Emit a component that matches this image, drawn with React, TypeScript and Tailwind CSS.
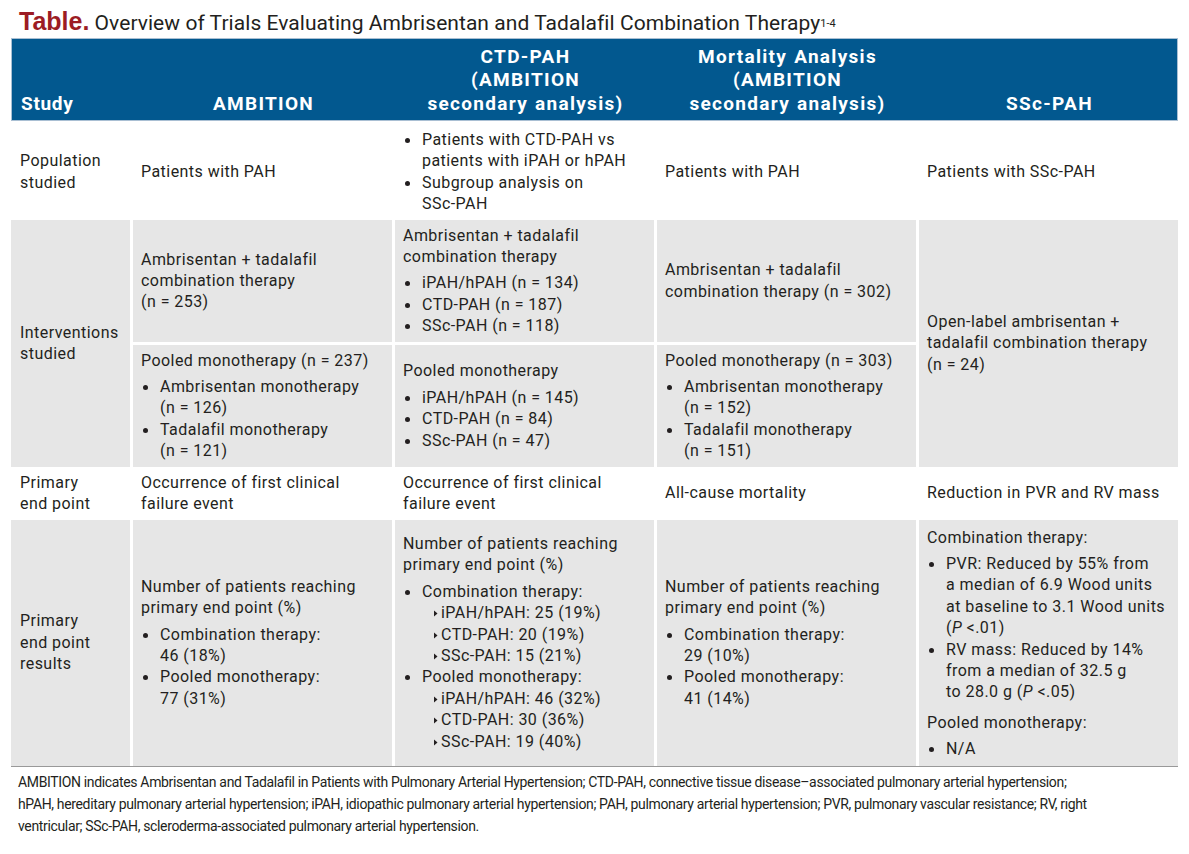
import React from "react";

const Dot = () => (
  <span className="w-[19px] shrink-0 flex items-start pt-[9px] pl-[2px]">
    <span className="block w-[5px] h-[5px] rounded-full bg-[#231f20]" />
  </span>
);

const B = ({ children }: { children: React.ReactNode }) => (
  <div className="flex">
    <Dot />
    <div>{children}</div>
  </div>
);

const S = ({ children }: { children: React.ReactNode }) => (
  <div className="flex pl-[31px]">
    <span className="w-[7px] shrink-0 flex items-start pt-[8px]">
      <svg width="4" height="7" viewBox="0 0 4 7">
        <path d="M0 0.5 L3.5 3.5 L0 6.5 Z" fill="#231f20" />
      </svg>
    </span>
    <div>{children}</div>
  </div>
);

const List = ({ children, className = "" }: { children: React.ReactNode; className?: string }) => (
  <div className={"mt-[5px] " + className}>{children}</div>
);

const Cell = ({
  children,
  gray = false,
  className = "",
}: {
  children?: React.ReactNode;
  gray?: boolean;
  className?: string;
}) => (
  <div
    className={
      "flex flex-col justify-center px-[8px] " +
      (gray ? "bg-[#e6e6e6] " : "bg-white ") +
      className
    }
  >
    <div>{children}</div>
  </div>
);

const Head = ({ children, left = false }: { children: React.ReactNode; left?: boolean }) => (
  <div className={"flex flex-col justify-end pb-[5px] " + (left ? "text-left pl-[9px] tracking-[0.7px]" : "text-center")}>
    {children}
  </div>
);

export default function App() {
  return (
    <div className="w-[1189px] h-[854px] bg-white px-[11px] font-['Roboto',sans-serif] text-[#231f20]">
      <div className="h-[38px] pt-[8px] pl-[8px] leading-[26px] text-[21px] whitespace-nowrap">
        <span className="font-['Liberation_Sans',sans-serif] font-bold text-[25px] text-[#9c1c24]">Table.</span>{" "}
        <span className="tracking-[0.05px]">Overview of Trials Evaluating Ambrisentan and Tadalafil Combination Therapy</span>
        <sup className="text-[11px] relative top-[-3px]">1-4</sup>
      </div>

      <div className="grid grid-cols-[119px_repeat(4,259px)] gap-x-[3px] h-[83px] bg-[#02588f] border border-[#a9bfd3] text-white font-bold text-[19px] leading-[23.5px] tracking-[1.3px] [word-spacing:1px] whitespace-nowrap">
        <Head left>Study</Head>
        <Head>AMBITION</Head>
        <Head>
          CTD-PAH
          <br />
          (AMBITION
          <br />
          secondary analysis)
        </Head>
        <Head>
          Mortality Analysis
          <br />
          (AMBITION
          <br />
          secondary analysis)
        </Head>
        <Head>SSc-PAH</Head>
      </div>

      <div className="grid grid-cols-[119px_repeat(4,259px)] gap-[3px] text-[16px] leading-[21.4px] tracking-[0.45px] whitespace-nowrap border-b border-[#999999]">
        {/* Row 1 */}
        <Cell className="pl-[9px] pt-[8px] pb-[2px]">
          Population
          <br />
          studied
        </Cell>
        <Cell className="pt-[8px] pb-[2px]">Patients with PAH</Cell>
        <Cell className="pt-[8px] pb-[2px]">
          <B>
            Patients with CTD-PAH vs
            <br />
            patients with iPAH or hPAH
          </B>
          <B>
            Subgroup analysis on
            <br />
            SSc-PAH
          </B>
        </Cell>
        <Cell className="pt-[8px] pb-[2px]">Patients with PAH</Cell>
        <Cell className="pt-[8px] pb-[2px]">Patients with SSc-PAH</Cell>

        {/* Row 2 */}
        <Cell gray className="row-span-2 pl-[9px] py-[5px]">
          Interventions
          <br />
          studied
        </Cell>
        <Cell gray className="py-[5px]">
          Ambrisentan + tadalafil
          <br />
          combination therapy
          <br />
          (n = 253)
        </Cell>
        <Cell gray className="py-[5px]">
          Ambrisentan + tadalafil
          <br />
          combination therapy
          <List>
            <B>iPAH/hPAH (n = 134)</B>
            <B>CTD-PAH (n = 187)</B>
            <B>SSc-PAH (n = 118)</B>
          </List>
        </Cell>
        <Cell gray className="py-[5px]">
          Ambrisentan + tadalafil
          <br />
          combination therapy (n = 302)
        </Cell>
        <Cell gray className="row-span-2 py-[5px]">
          Open-label ambrisentan +
          <br />
          tadalafil combination therapy
          <br />
          (n = 24)
        </Cell>
        <Cell gray className="py-[5px]">
          Pooled monotherapy (n = 237)
          <List>
            <B>
              Ambrisentan monotherapy
              <br />
              (n = 126)
            </B>
            <B>
              Tadalafil monotherapy
              <br />
              (n = 121)
            </B>
          </List>
        </Cell>
        <Cell gray className="py-[5px]">
          Pooled monotherapy
          <List>
            <B>iPAH/hPAH (n = 145)</B>
            <B>CTD-PAH (n = 84)</B>
            <B>SSc-PAH (n = 47)</B>
          </List>
        </Cell>
        <Cell gray className="py-[5px]">
          Pooled monotherapy (n = 303)
          <List>
            <B>
              Ambrisentan monotherapy
              <br />
              (n = 152)
            </B>
            <B>
              Tadalafil monotherapy
              <br />
              (n = 151)
            </B>
          </List>
        </Cell>

        {/* Row 3 */}
        <Cell className="pl-[9px] py-[2px]">
          Primary
          <br />
          end point
        </Cell>
        <Cell className="py-[2px]">
          Occurrence of first clinical
          <br />
          failure event
        </Cell>
        <Cell className="py-[2px]">
          Occurrence of first clinical
          <br />
          failure event
        </Cell>
        <Cell className="py-[2px]">All-cause mortality</Cell>
        <Cell className="py-[2px]">Reduction in PVR and RV mass</Cell>

        {/* Row 4 */}
        <Cell gray className="pl-[9px] py-[5px]">
          Primary
          <br />
          end point
          <br />
          results
        </Cell>
        <Cell gray className="py-[5px]">
          Number of patients reaching
          <br />
          primary end point (%)
          <List>
            <B>
              Combination therapy:
              <br />
              46 (18%)
            </B>
            <B>
              Pooled monotherapy:
              <br />
              77 (31%)
            </B>
          </List>
        </Cell>
        <Cell gray className="py-[5px]">
          Number of patients reaching
          <br />
          primary end point (%)
          <List>
            <B>Combination therapy:</B>
            <S>iPAH/hPAH: 25 (19%)</S>
            <S>CTD-PAH: 20 (19%)</S>
            <S>SSc-PAH: 15 (21%)</S>
            <B>Pooled monotherapy:</B>
            <S>iPAH/hPAH: 46 (32%)</S>
            <S>CTD-PAH: 30 (36%)</S>
            <S>SSc-PAH: 19 (40%)</S>
          </List>
        </Cell>
        <Cell gray className="py-[5px]">
          Number of patients reaching
          <br />
          primary end point (%)
          <List>
            <B>
              Combination therapy:
              <br />
              29 (10%)
            </B>
            <B>
              Pooled monotherapy:
              <br />
              41 (14%)
            </B>
          </List>
        </Cell>
        <Cell gray className="pt-[7px] pb-[6px]">
          Combination therapy:
          <List>
            <B>
              PVR: Reduced by 55% from
              <br />
              a median of 6.9 Wood units
              <br />
              at baseline to 3.1 Wood units
              <br />(<i>P</i> &lt;.01)
            </B>
            <B>
              RV mass: Reduced by 14%
              <br />
              from a median of 32.5 g
              <br />
              to 28.0 g (<i>P</i> &lt;.05)
            </B>
          </List>
          <div className="mt-[9px]">Pooled monotherapy:</div>
          <List>
            <B>N/A</B>
          </List>
        </Cell>
      </div>

      <div className="pl-[7px] pt-[4px] text-[14px] leading-[22px] tracking-[-0.35px] whitespace-nowrap">
        AMBITION indicates Ambrisentan and Tadalafil in Patients with Pulmonary Arterial Hypertension; CTD-PAH,
        connective tissue disease–associated pulmonary arterial hypertension;
        <br />
        hPAH, hereditary pulmonary arterial hypertension; iPAH, idiopathic pulmonary arterial hypertension; PAH,
        pulmonary arterial hypertension; PVR, pulmonary vascular resistance; RV, right
        <br />
        ventricular; SSc-PAH, scleroderma-associated pulmonary arterial hypertension.
      </div>
    </div>
  );
}
